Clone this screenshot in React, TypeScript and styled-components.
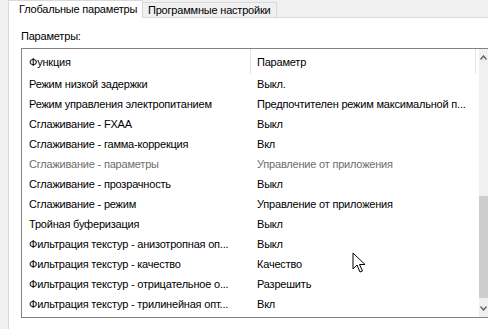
import React from 'react';
import styled, { createGlobalStyle } from 'styled-components';

const ROWS = [
  { name: 'Режим низкой задержки', value: 'Выкл.' },
  { name: 'Режим управления электропитанием', value: 'Предпочтителен режим максимальной п...' },
  { name: 'Сглаживание - FXAA', value: 'Выкл' },
  { name: 'Сглаживание - гамма-коррекция', value: 'Вкл' },
  { name: 'Сглаживание - параметры', value: 'Управление от приложения', disabled: true },
  { name: 'Сглаживание - прозрачность', value: 'Выкл' },
  { name: 'Сглаживание - режим', value: 'Управление от приложения' },
  { name: 'Тройная буферизация', value: 'Выкл' },
  { name: 'Фильтрация текстур - анизотропная оп...', value: 'Выкл' },
  { name: 'Фильтрация текстур - качество', value: 'Качество' },
  { name: 'Фильтрация текстур - отрицательное о...', value: 'Разрешить' },
  { name: 'Фильтрация текстур - трилинейная опт...', value: 'Вкл' },
];

export default function App() {
  return (
    <>
      <GlobalStyle />
      <Window>
        <Tabs>
          <Tab active>Глобальные параметры</Tab>
          <Tab>Программные настройки</Tab>
          <TabFill />
        </Tabs>
        <Page>
          <Label>Параметры:</Label>
          <Table>
            <Grid>
              <HeaderRow>
                <HeadCell>Функция</HeadCell>
                <HeadCell divider>Параметр</HeadCell>
              </HeaderRow>
              {ROWS.map((row) => (
                <Row key={row.name} disabled={row.disabled}>
                  <Cell>{row.name}</Cell>
                  <Cell>{row.value}</Cell>
                </Row>
              ))}
            </Grid>
            <Scrollbar>
              <Arrow>
                <svg width="7" height="5" viewBox="0 0 7 5">
                  <path d="M0.5 4.5 L3.5 1 L6.5 4.5" stroke="#606060" strokeWidth="1.4" fill="none" />
                </svg>
              </Arrow>
              <Track>
                <Thumb />
              </Track>
              <Arrow>
                <svg width="7" height="5" viewBox="0 0 7 5">
                  <path d="M0.5 0.5 L3.5 4 L6.5 0.5" stroke="#606060" strokeWidth="1.4" fill="none" />
                </svg>
              </Arrow>
            </Scrollbar>
            <Cursor width="14" height="22" viewBox="0 0 14 22">
              <path
                d="M1 1 L1 17 L5 13 L8 20 L10.5 19 L7.5 12.5 L13 12.5 Z"
                fill="#fff"
                stroke="#000"
                strokeWidth="1"
                strokeLinejoin="round"
              />
            </Cursor>
          </Table>
        </Page>
      </Window>
    </>
  );
}

const GlobalStyle = createGlobalStyle`
  html, body {
    margin: 0;
    padding: 0;
    background: #f0f0f0;
  }
  body {
    font-family: "Liberation Sans", Arial, sans-serif;
    font-size: 11px;
    letter-spacing: -0.2px;
    color: #000;
  }
`;

const Window = styled.div`
  width: 488px;
  height: 329px;
  display: flex;
  flex-direction: column;
  overflow: hidden;
  background: #f0f0f0;
`;

const Tabs = styled.div`
  display: flex;
  align-items: flex-end;
  height: 18px;
  padding-left: 8px;
`;

const Tab = styled.div<{ active?: boolean }>`
  width: ${(p) => (p.active ? '135px' : '135px')};
  height: ${(p) => (p.active ? '18px' : '16px')};
  box-sizing: border-box;
  padding: 0 0 0 ${(p) => (p.active ? '10px' : '5px')};
  display: flex;
  align-items: center;
  white-space: nowrap;
  line-height: 1;
  background: ${(p) => (p.active ? '#fff' : '#f0f0f0')};
  border: 1px solid #d9d9d9;
  border-bottom: ${(p) => (p.active ? 'none' : '1px solid #d9d9d9')};
  margin-left: ${(p) => (p.active ? '0' : '-1px')};
  position: relative;
  z-index: ${(p) => (p.active ? 1 : 0)};
`;

const TabFill = styled.div`
  flex: 1;
  height: 1px;
  background: #d9d9d9;
`;

const Page = styled.div`
  flex: 1;
  margin-left: 8px;
  background: #fff;
  border-left: 1px solid #d9d9d9;
  display: flex;
  flex-direction: column;
  padding: 11px 0 11px 12px;
`;

const Label = styled.div`
  height: 19px;
  line-height: 15px;
`;

const Table = styled.div`
  flex: 1;
  position: relative;
  display: flex;
  border: 1px solid #828282;
  border-right: none;
  background: #fff;
  overflow: hidden;
`;

const Grid = styled.div`
  flex: 1;
  display: flex;
  flex-direction: column;
`;

const HeaderRow = styled.div`
  display: grid;
  grid-template-columns: 228px 1fr;
  height: 25px;
  align-items: center;
`;

const HeadCell = styled.div<{ divider?: boolean }>`
  height: 100%;
  display: flex;
  align-items: center;
  padding-left: ${(p) => (p.divider ? '6px' : '7px')};
  border-left: ${(p) => (p.divider ? '1px solid #e5e5e5' : 'none')};
  border-right: ${(p) => (p.divider ? '1px solid #e5e5e5' : 'none')};
  margin-right: ${(p) => (p.divider ? '3px' : '0')};
`;

const Row = styled.div<{ disabled?: boolean }>`
  display: grid;
  grid-template-columns: 228px 1fr;
  height: 20px;
  align-items: center;
  color: ${(p) => (p.disabled ? '#6d6d6d' : '#000')};
`;

const Cell = styled.div`
  padding-left: 7px;
  white-space: nowrap;
  overflow: hidden;
`;

const Scrollbar = styled.div`
  width: 9px;
  display: flex;
  flex-direction: column;
  background: #f0f0f0;
`;

const Arrow = styled.div`
  height: 17px;
  display: flex;
  align-items: center;
  justify-content: flex-start;
  padding-left: 1px;
`;

const Track = styled.div`
  flex: 1;
  display: flex;
  flex-direction: column;
  justify-content: flex-end;
  padding-bottom: 2px;
`;

const Thumb = styled.div`
  height: 102px;
  background: #cdcdcd;
`;

const Cursor = styled.svg`
  position: absolute;
  left: 330px;
  top: 203px;
`;
